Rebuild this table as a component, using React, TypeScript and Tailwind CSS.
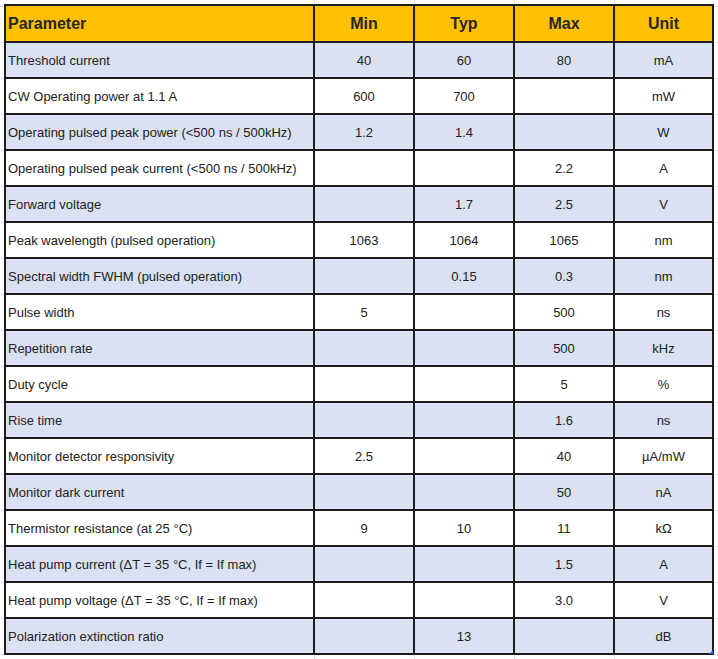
const rows: [string, string, string, string, string][] = [
  ["Threshold current", "40", "60", "80", "mA"],
  ["CW Operating power at 1.1 A", "600", "700", "", "mW"],
  ["Operating pulsed peak power (<500 ns / 500kHz)", "1.2", "1.4", "", "W"],
  ["Operating pulsed peak current (<500 ns / 500kHz)", "", "", "2.2", "A"],
  ["Forward voltage", "", "1.7", "2.5", "V"],
  ["Peak wavelength (pulsed operation)", "1063", "1064", "1065", "nm"],
  ["Spectral width FWHM (pulsed operation)", "", "0.15", "0.3", "nm"],
  ["Pulse width", "5", "", "500", "ns"],
  ["Repetition rate", "", "", "500", "kHz"],
  ["Duty cycle", "", "", "5", "%"],
  ["Rise time", "", "", "1.6", "ns"],
  ["Monitor detector responsivity", "2.5", "", "40", "µA/mW"],
  ["Monitor dark current", "", "", "50", "nA"],
  ["Thermistor resistance (at 25 °C)", "9", "10", "11", "kΩ"],
  ["Heat pump current (ΔT = 35 °C, If = If max)", "", "", "1.5", "A"],
  ["Heat pump voltage (ΔT = 35 °C, If = If max)", "", "", "3.0", "V"],
  ["Polarization extinction ratio", "", "13", "", "dB"],
];

const headers = ["Min", "Typ", "Max", "Unit"];

export default function App() {
  return (
    // faint spreadsheet gridlines behind the table
    <div className="min-h-screen bg-white bg-[image:linear-gradient(to_right,transparent_314px,#e2e2e2_314px,#e2e2e2_315px,transparent_315px,transparent_414px,#e2e2e2_414px,#e2e2e2_415px,transparent_415px,transparent_514px,#e2e2e2_514px,#e2e2e2_515px,transparent_515px,transparent_614px,#e2e2e2_614px,#e2e2e2_615px,transparent_615px),repeating-linear-gradient(to_bottom,transparent_0,transparent_6px,#e2e2e2_6px,#e2e2e2_7px,transparent_7px,transparent_36px)] p-[4px] font-['Liberation_Sans',Arial,sans-serif]">
      <div className="relative grid w-fit grid-cols-[307px_98px_98px_98px_97px] gap-[2px] bg-[#1c1c1c] p-[2px]">
        {/* header row */}
        <div className="flex h-[35px] items-center bg-[#ffc000] pl-[2px] pt-[1px] text-[16px] font-bold text-[#262626]">
          Parameter
        </div>
        {headers.map((h) => (
          <div
            key={h}
            className="flex h-[35px] items-center justify-center bg-[#ffc000] pt-[1px] text-[16px] font-bold text-[#262626]"
          >
            {h}
          </div>
        ))}

        {rows.map((r, i) => {
          const bg = i % 2 === 0 ? "bg-[#d9e1f2]" : "bg-white";
          return r.map((cell, j) => (
            <div
              key={`${i}-${j}`}
              className={`flex h-[34px] items-center pt-[1px] text-[13px] text-[#222] ${bg} ${
                j === 0 ? "pl-[2px]" : "justify-center"
              }`}
            >
              {cell}
            </div>
          ));
        })}

        <span className="absolute bottom-[1px] right-[1px] h-0 w-0 border-b-[4px] border-l-[4px] border-b-[#3b5bdb] border-l-transparent" />
      </div>
    </div>
  );
}
